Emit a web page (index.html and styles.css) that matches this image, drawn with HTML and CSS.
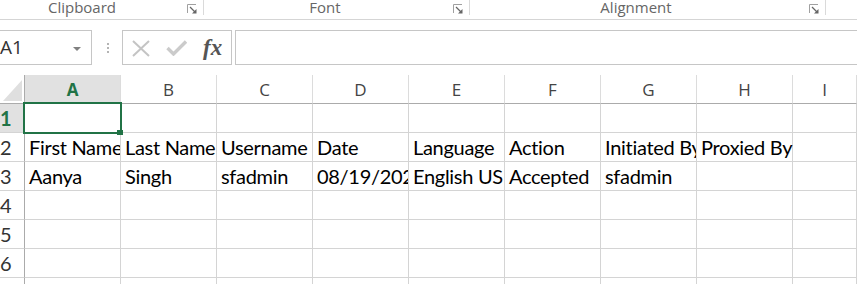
FILE: index.html
```html
<!DOCTYPE html>
<html>
    <head>
        <meta charset="UTF-8">
        <title>Book1 - Excel</title>
        <link rel="stylesheet" href="styles.css">
    </head>

    <body>
        <div class="ribbon">
            <div class="group group-clipboard">
                <span class="group-label">Clipboard</span>
                <span class="launcher"><svg width="10" height="10" viewBox="0 0 10 10"><path d="M0.5 9V0.5H9" fill="none" stroke="#a0a0a0"/><path d="M3 3L8 8" stroke="#666" stroke-width="1.2"/><path d="M9.5 5V9.5H5Z" fill="#666"/></svg></span>
            </div>
            <div class="group group-font">
                <span class="group-label">Font</span>
                <span class="launcher"><svg width="10" height="10" viewBox="0 0 10 10"><path d="M0.5 9V0.5H9" fill="none" stroke="#a0a0a0"/><path d="M3 3L8 8" stroke="#666" stroke-width="1.2"/><path d="M9.5 5V9.5H5Z" fill="#666"/></svg></span>
            </div>
            <div class="group group-align">
                <span class="group-label">Alignment</span>
                <span class="launcher"><svg width="10" height="10" viewBox="0 0 10 10"><path d="M0.5 9V0.5H9" fill="none" stroke="#a0a0a0"/><path d="M3 3L8 8" stroke="#666" stroke-width="1.2"/><path d="M9.5 5V9.5H5Z" fill="#666"/></svg></span>
            </div>
        </div>

        <div class="formula-bar">
            <div class="name-box">
                <span class="name-ref">A1</span>
                <span class="name-caret"></span>
            </div>
            <div class="grip"><i></i><i></i><i></i></div>
            <div class="fx-box">
                <svg class="icon-cancel" width="18" height="17" viewBox="0 0 18 17"><path d="M1 1L17 16M17 1L1 16" stroke="#c4c4c4" stroke-width="2"/></svg>
                <svg class="icon-enter" width="21" height="16" viewBox="0 0 21 16"><path d="M1.5 8L7.5 14L20 1.5" fill="none" stroke="#cbcbcb" stroke-width="3.4"/></svg>
                <span class="fx">fx</span>
            </div>
            <div class="formula-input"></div>
        </div>

        <div class="sheet">
            <div class="cell corner"><svg width="19" height="21" viewBox="0 0 19 21"><path d="M0 21L19 0V21Z" fill="#dfdfdf"/></svg></div>
            <div class="cell col-head selected">A</div>
            <div class="cell col-head">B</div>
            <div class="cell col-head">C</div>
            <div class="cell col-head">D</div>
            <div class="cell col-head">E</div>
            <div class="cell col-head">F</div>
            <div class="cell col-head">G</div>
            <div class="cell col-head">H</div>
            <div class="cell col-head">I</div>

            <div class="cell row-head selected">1</div>
            <div class="cell active"><span class="fill-handle"></span></div>
            <div class="cell"></div><div class="cell"></div><div class="cell"></div><div class="cell"></div>
            <div class="cell"></div><div class="cell"></div><div class="cell"></div><div class="cell"></div>

            <div class="cell row-head">2</div>
            <div class="cell">First Name</div>
            <div class="cell">Last Name</div>
            <div class="cell">Username</div>
            <div class="cell">Date</div>
            <div class="cell">Language</div>
            <div class="cell">Action</div>
            <div class="cell">Initiated By</div>
            <div class="cell spill">Proxied By</div>
            <div class="cell"></div>

            <div class="cell row-head">3</div>
            <div class="cell">Aanya</div>
            <div class="cell">Singh</div>
            <div class="cell">sfadmin</div>
            <div class="cell">08/19/2023</div>
            <div class="cell">English US</div>
            <div class="cell">Accepted</div>
            <div class="cell">sfadmin</div>
            <div class="cell"></div>
            <div class="cell"></div>

            <div class="cell row-head">4</div>
            <div class="cell"></div><div class="cell"></div><div class="cell"></div><div class="cell"></div>
            <div class="cell"></div><div class="cell"></div><div class="cell"></div><div class="cell"></div><div class="cell"></div>

            <div class="cell row-head">5</div>
            <div class="cell"></div><div class="cell"></div><div class="cell"></div><div class="cell"></div>
            <div class="cell"></div><div class="cell"></div><div class="cell"></div><div class="cell"></div><div class="cell"></div>

            <div class="cell row-head">6</div>
            <div class="cell"></div><div class="cell"></div><div class="cell"></div><div class="cell"></div>
            <div class="cell"></div><div class="cell"></div><div class="cell"></div><div class="cell"></div><div class="cell"></div>

            <div class="cell row-head"></div>
            <div class="cell"></div><div class="cell"></div><div class="cell"></div><div class="cell"></div>
            <div class="cell"></div><div class="cell"></div><div class="cell"></div><div class="cell"></div><div class="cell"></div>
        </div>
    </body>
</html>
```

FILE: styles.css
```css
* {
    box-sizing: border-box;
}
html, body {
    margin: 0;
    height: 100%;
    overflow: hidden;
    background-color: #fff;
}
body {
    font-family: "Open Sans", Arial, sans-serif;
}

/* ribbon group labels */
.ribbon {
    display: flex;
    height: 20px;
    border-bottom: 1px solid #d5d5d5;
}
.group {
    display: flex;
    height: 15px;
    border-right: 1px solid #dadada;
    flex-shrink: 0;
}
.group-clipboard {
    width: 220px;
    margin-left: -16px;
}
.group-font {
    width: 266px;
}
.group-align {
    width: 356px;
}
.group-label {
    flex: 1;
    text-align: center;
    font-size: 15px;
    line-height: 15px;
    color: #666;
}
.launcher {
    width: 23px;
    display: flex;
    justify-content: center;
    padding-top: 4px;
}

/* formula bar */
.formula-bar {
    display: flex;
    height: 35px;
    margin-top: 10px;
}
.name-box {
    width: 92px;
    display: flex;
    align-items: center;
    border: 1px solid #c6c6c6;
    border-left: none;
}
.name-ref {
    font-size: 19px;
    line-height: 33px;
    color: #333;
}
.name-caret {
    margin-left: auto;
    margin-right: 10px;
    margin-top: 2px;
    border-left: 4px solid transparent;
    border-right: 4px solid transparent;
    border-top: 4px solid #808080;
}
.grip {
    display: flex;
    flex-direction: column;
    justify-content: center;
    gap: 2px;
    margin: 0 13px 0 15px;
}
.grip i {
    display: block;
    width: 2px;
    height: 2px;
    background-color: #b4b4b4;
}
.fx-box {
    width: 110px;
    display: flex;
    align-items: center;
    padding-left: 9px;
    border: 1px solid #c6c6c6;
}
.icon-cancel {
    margin-top: 2px;
}
.icon-enter {
    margin-left: 16px;
    margin-top: 1px;
}
.fx {
    margin-left: 16px;
    font-family: "Liberation Serif", serif;
    font-style: italic;
    font-weight: bold;
    font-size: 23px;
    color: #555;
}
.formula-input {
    flex: 1;
    margin-left: 3px;
    border: 1px solid #c6c6c6;
    border-right: none;
}

/* worksheet grid */
.sheet {
    display: grid;
    grid-template-columns: 25px repeat(8, 96px) 1fr;
    grid-template-rows: repeat(7, 29px) 7px;
    margin-top: 10px;
}
.cell {
    border-right: 1px solid #d4d4d4;
    border-bottom: 1px solid #d4d4d4;
    padding: 0 4px;
    overflow: hidden;
    white-space: nowrap;
    font-family: Lato, "Liberation Sans", sans-serif;
    font-size: 20px;
    line-height: 28px;
    letter-spacing: -0.3px;
    color: #000;
}
.cell.spill {
    overflow: visible;
}
.corner {
    display: flex;
    justify-content: flex-end;
    align-items: flex-end;
    padding: 0 2px 2px 0;
    border-right-color: #ababab;
    border-bottom-color: #ababab;
}
.col-head {
    padding: 1px 0 0;
    text-align: center;
    font-family: "Open Sans", sans-serif;
    font-size: 17px;
    letter-spacing: 0;
    color: #444;
    border-right-color: #dcdcdc;
    border-bottom-color: #ababab;
}
.row-head {
    padding: 0;
    color: #333;
    border-right-color: #ababab;
}
.col-head.selected,
.row-head.selected {
    background-color: #e1e1e1;
    color: #217346;
    font-weight: bold;
}
.active {
    position: relative;
    overflow: visible;
}
.active::after {
    content: "";
    position: absolute;
    top: -2px;
    left: -2px;
    right: -2px;
    bottom: -2px;
    border: 2px solid #217346;
}
.fill-handle {
    position: absolute;
    left: 92px;
    top: 26px;
    width: 6px;
    height: 5px;
    background-color: #217346;
    z-index: 1;
}
```
